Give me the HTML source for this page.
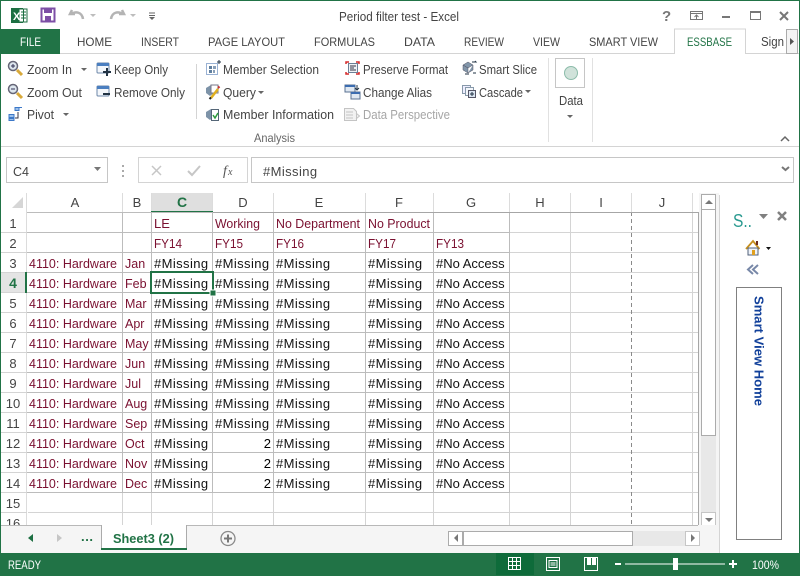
<!DOCTYPE html>
<html><head><meta charset="utf-8"><title>Period filter test - Excel</title>
<style>
html,body{margin:0;padding:0;background:#fff;width:800px;height:576px;overflow:hidden}
svg{display:block}
text{font-family:"Liberation Sans",sans-serif;font-size:13px;fill:#000;white-space:pre}
.t{font-size:12px;fill:#444}
.r{font-size:12.5px;fill:#444}
.l{font-size:12.5px;fill:#7a1030}
.l2{font-size:13px;fill:#7a1030}
.m{letter-spacing:.4px;fill:#111}
.n{fill:#111}
.h{fill:#444;font-size:13px;text-anchor:middle}
.w{fill:#fff;font-size:12px}
</style></head><body>
<svg width="800" height="576" viewBox="0 0 800 576" xmlns="http://www.w3.org/2000/svg">
<rect width="800" height="576" fill="#fff"/>

<!-- title bar -->
<rect x="11" y="8" width="12" height="15" fill="#1d6f42"/><rect x="19" y="9" width="8" height="13" fill="#fff" stroke="#1d6f42"/>
<path d="M21 12h5M21 15h5M21 18h5M23.500 9v13" stroke="#1d6f42" fill="none"/>
<text x="13" y="20" style="font-size:11px;font-weight:bold;fill:#fff">X</text>
<path d="M41.500 8.500h13v13h-13z" fill="#fff" stroke="#7d4fa6" stroke-width="2"/><rect x="44" y="8" width="8" height="5" fill="#7d4fa6"/><rect x="45" y="16" width="6" height="5" fill="#7d4fa6"/>
<path d="M72 10l-2 4 5 0M71 14c5-3 11-2 12 5" fill="none" stroke="#b4b4b4" stroke-width="2.500"/><path d="M90 14h6l-3 3z" fill="#bdbdbd"/>
<path d="M122 10l2 4-5 0M123 14c-5-3-11-2-12 5" fill="none" stroke="#b4b4b4" stroke-width="2.500"/><path d="M130 14h6l-3 3z" fill="#bdbdbd"/>
<path d="M149 13h6M149 15.500h6" stroke="#666"/><path d="M149 17h6l-3 3z" fill="#666"/>
<text x="339" y="21" class="r" textLength="120" lengthAdjust="spacingAndGlyphs">Period filter test - Excel</text>
<text x="662" y="21" style="font-size:15px;font-weight:bold;fill:#777">?</text>
<rect x="690.500" y="11.500" width="12" height="8" fill="none" stroke="#777"/><path d="M690 13.500h13M696.500 19v-4M694.500 17l2-2 2 2" stroke="#777" fill="none"/>
<rect x="722" y="16" width="8" height="2" fill="#777"/>
<rect x="750.500" y="11.500" width="10" height="8" fill="none" stroke="#777"/><rect x="750" y="11" width="11" height="2" fill="#777"/>
<path d="M780 12l8 8M788 12l-8 8" stroke="#777" stroke-width="2"/>

<!-- tabs -->
<rect x="0" y="53" width="800" height="1" fill="#d4d4d4"/>
<rect x="1" y="29" width="59" height="25" fill="#217346"/>
<text x="20" y="46" style="font-size:12px;fill:#fff" textLength="21" lengthAdjust="spacingAndGlyphs">FILE</text>
<text x="77" y="46" class="t" textLength="35" lengthAdjust="spacingAndGlyphs">HOME</text>
<text x="141" y="46" class="t" textLength="38" lengthAdjust="spacingAndGlyphs">INSERT</text>
<text x="208" y="46" class="t" textLength="77" lengthAdjust="spacingAndGlyphs">PAGE LAYOUT</text>
<text x="314" y="46" class="t" textLength="61" lengthAdjust="spacingAndGlyphs">FORMULAS</text>
<text x="404" y="46" class="t" textLength="31" lengthAdjust="spacingAndGlyphs">DATA</text>
<text x="464" y="46" class="t" textLength="40" lengthAdjust="spacingAndGlyphs">REVIEW</text>
<text x="533" y="46" class="t" textLength="27" lengthAdjust="spacingAndGlyphs">VIEW</text>
<text x="589" y="46" class="t" textLength="69" lengthAdjust="spacingAndGlyphs">SMART VIEW</text>
<path d="M674.500 54v-25h71v25" fill="#fff" stroke="#d4d4d4"/><rect x="675" y="53" width="70" height="1" fill="#fff"/>
<text x="687" y="46" style="font-size:12px;fill:#217346" textLength="45" lengthAdjust="spacingAndGlyphs">ESSBASE</text>
<text x="761" y="46" class="r" textLength="23" lengthAdjust="spacingAndGlyphs">Sign</text>
<rect x="786.500" y="29.500" width="11" height="24" fill="#f4f4f4" stroke="#ababab"/><path d="M790 38v7l4-3.500z" fill="#555"/>

<!-- ribbon text -->
<text x="27" y="74" class="r" textLength="45" lengthAdjust="spacingAndGlyphs">Zoom In</text>
<text x="27" y="97" class="r" textLength="55" lengthAdjust="spacingAndGlyphs">Zoom Out</text>
<text x="27" y="119" class="r" textLength="27" lengthAdjust="spacingAndGlyphs">Pivot</text>
<text x="114" y="74" class="r" textLength="54" lengthAdjust="spacingAndGlyphs">Keep Only</text>
<text x="114" y="97" class="r" textLength="71" lengthAdjust="spacingAndGlyphs">Remove Only</text>
<text x="223" y="74" class="r" textLength="96" lengthAdjust="spacingAndGlyphs">Member Selection</text>
<text x="223" y="97" class="r" textLength="33" lengthAdjust="spacingAndGlyphs">Query</text>
<text x="223" y="119" class="r" textLength="111" lengthAdjust="spacingAndGlyphs">Member Information</text>
<text x="363" y="74" class="r" textLength="85" lengthAdjust="spacingAndGlyphs">Preserve Format</text>
<text x="363" y="97" class="r" textLength="69" lengthAdjust="spacingAndGlyphs">Change Alias</text>
<text x="363" y="119" style="font-size:12.500px;fill:#a6a6a6" textLength="87" lengthAdjust="spacingAndGlyphs">Data Perspective</text>
<text x="479" y="74" class="r" textLength="58" lengthAdjust="spacingAndGlyphs">Smart Slice</text>
<text x="479" y="97" class="r" textLength="44" lengthAdjust="spacingAndGlyphs">Cascade</text>
<text x="559" y="105" class="r" textLength="24" lengthAdjust="spacingAndGlyphs">Data</text>
<text x="254" y="142" style="font-size:12px;fill:#666" textLength="41" lengthAdjust="spacingAndGlyphs">Analysis</text>

<!-- ribbon carets -->
<path d="M81 68h6l-3 3zM63 113h6l-3 3zM258 91h6l-3 3zM525 90h6l-3 3zM567 115h6l-3 3z" fill="#666"/>

<!-- separators -->
<rect x="196" y="64" width="1" height="55" fill="#d4d4d4"/>
<rect x="548" y="58" width="1" height="84" fill="#e1e1e1"/>
<rect x="592" y="58" width="1" height="84" fill="#e1e1e1"/>
<rect x="0" y="146" width="800" height="1" fill="#d4d4d4"/>
<path d="M781 141l4-4 4 4" fill="none" stroke="#666" stroke-width="1.500"/>

<!-- ribbon icons -->
<circle cx="13" cy="66" r="4.500" fill="#dde6ee" stroke="#667"  stroke-width="1.500"/><path d="M11 66h4M13 64v4" stroke="#335"/><path d="M17 70l5 5" stroke="#d8a93a" stroke-width="3"/>
<circle cx="13" cy="89" r="4.500" fill="#dde6ee" stroke="#667" stroke-width="1.500"/><path d="M11 89h4" stroke="#335"/><path d="M17 93l5 5" stroke="#d8a93a" stroke-width="3"/>
<path d="M15 107.500h4v3h-4zM19 107.500h3M9 114.500h5v3h-5zM9 118.500h5v2h-5z" fill="#9cc0ea" stroke="#3c78c8"/><path d="M18 112v6h-3" stroke="#334" fill="none"/>
<rect x="97" y="63" width="12" height="10" rx="1" fill="#f4f7fb" stroke="#6d87a8"/><rect x="97" y="63" width="12" height="3" fill="#4b7fc0"/><path d="M103 72h8M107 68v8" stroke="#234" stroke-width="2"/>
<rect x="97" y="86" width="12" height="10" rx="1" fill="#f4f7fb" stroke="#6d87a8"/><rect x="97" y="86" width="12" height="3" fill="#4b7fc0"/><path d="M103 94h7" stroke="#234" stroke-width="2"/>
<rect x="206.500" y="63.500" width="11" height="11" fill="none" stroke="#3566a8" stroke-dasharray="1 1"/><rect x="209" y="66" width="3" height="3" fill="#5f7f9f"/><rect x="213" y="66" width="3" height="3" fill="#8aa0b8"/><rect x="209" y="70" width="3" height="3" fill="#5f7f9f"/><rect x="213" y="70" width="2" height="3" fill="#8aa0b8"/><path d="M217 62h4M219 60v4" stroke="#234"/>
<path d="M206 88l5-3 3 2v6l-4 3-4-3z" fill="#7d93a8"/><rect x="211" y="85" width="7" height="8" fill="#fff" stroke="#778"/><path d="M211 98l7-9" stroke="#e0b020" stroke-width="2.500"/><path d="M218 88l1.500-1.500" stroke="#c33" stroke-width="2"/><path d="M209.500 99l1.500-1.500" stroke="#222" stroke-width="2"/>
<path d="M206 112l5-3 3 2v6l-4 3-4-3z" fill="#7d93a8"/><rect x="211.500" y="109.500" width="7" height="11" fill="#fff" stroke="#567"/><path d="M213 115l2 3 3-5" stroke="#2a9a3a" fill="none" stroke-width="1.500"/>
<path d="M346 64v-2h3M356 62h3v2M346 72v2h3M359 72v2h-3" stroke="#d62a2a" fill="none" stroke-width="1.500"/><rect x="348.500" y="63.500" width="9" height="9" fill="#eef2f6" stroke="#6a7f96"/><path d="M350 66h6M350 68h4M350 70h6" stroke="#334"/>
<rect x="345" y="85" width="10" height="7" fill="#dfe8f2" stroke="#5a7090"/><rect x="345" y="85" width="10" height="2" fill="#3b6cb0"/><rect x="351" y="92" width="9" height="7" fill="#dfe8f2" stroke="#5a7090"/><rect x="351" y="92" width="9" height="2" fill="#3b6cb0"/><path d="M357 85v5M355 88l2 2 2-2" stroke="#234" fill="none"/>
<path d="M344.500 108.500h9l3 3v9h-12zM356 113l3.500 3-3.500 3" fill="#f2f2f2" stroke="#c4c4c4"/><path d="M346 112h7M346 115h7M346 118h7" stroke="#c4c4c4"/>
<path d="M463 65l5-3 5 3-5 3zM463 65v5l5 3v-5zM473 65v5l-5 3" fill="#8296aa" stroke="#556"  stroke-width=".5"/><path d="M472 62h4l-1-1M476 73h-3M465 74h4" stroke="#234" fill="none"/>
<rect x="462.500" y="85.500" width="8" height="8" fill="#eef" stroke="#8899aa"/><rect x="465.500" y="87.500" width="8" height="8" fill="#f4f7fb" stroke="#8899aa"/><rect x="468.500" y="90.500" width="7" height="7" fill="#dce6f2" stroke="#556"/><path d="M470 94h4M472 92v4" stroke="#234"/>
<rect x="555.500" y="58.500" width="29" height="29" fill="#fff" stroke="#c6c6c6"/>
<circle cx="571" cy="73" r="6.500" fill="#d0e2da" stroke="#8cbcaa"/>

<!-- formula bar -->
<rect x="6.500" y="157.500" width="101" height="25" fill="#fff" stroke="#c6c6c6"/>
<text x="13" y="176" style="font-size:13px;fill:#444" textLength="16" lengthAdjust="spacingAndGlyphs">C4</text>
<path d="M94 167h7l-3.500 4z" fill="#777"/>
<path d="M123 165v2M123 170v2M123 175v2" stroke="#aaa" stroke-width="2"/>
<rect x="138.500" y="157.500" width="109" height="25" fill="#fff" stroke="#d4d4d4"/>
<path d="M152 166l9 9M161 166l-9 9" stroke="#c6c6c6" stroke-width="1.500"/>
<path d="M188 171l4 4 8-9" stroke="#c6c6c6" stroke-width="2" fill="none"/>
<text x="223" y="175" style="font-family:'Liberation Serif',serif;font-style:italic;font-size:14px;fill:#555">f</text><text x="228" y="175" style="font-family:'Liberation Serif',serif;font-style:italic;font-size:10px;fill:#555">x</text>
<rect x="251.500" y="157.500" width="542" height="25" fill="#fff" stroke="#c6c6c6"/>
<text x="263" y="176" class="m" style="fill:#444">#Missing</text>
<path d="M782 167l3.500 3 3.500-3" stroke="#777" stroke-width="2" fill="none"/>

<!-- headers -->
<path d="M23 197v11h-11z" fill="#d6d6d6"/>
<rect x="152" y="193" width="60" height="18" fill="#dfdfdf"/>
<rect x="26" y="272" width="1" height="20" fill="#e1e1e1"/>
<rect x="1" y="273" width="24" height="19" fill="#e4e4e4"/>
<path d="M26.500 193v332M122.500 193v19M151.500 193v19M212.500 193v19M273.500 193v19M365.500 193v19M433.500 193v19M509.500 193v19M570.500 193v19M631.500 193v19M692.500 193v19" stroke="#dcdcdc" fill="none"/>
<text x="75" y="207" class="h">A</text><text x="137" y="207" class="h">B</text>
<text x="182" y="207" class="h" style="fill:#217346;font-weight:bold;font-size:14px">C</text>
<text x="243" y="207" class="h">D</text><text x="319" y="207" class="h">E</text><text x="399" y="207" class="h">F</text><text x="471" y="207" class="h">G</text><text x="540" y="207" class="h">H</text><text x="601" y="207" class="h">I</text><text x="662" y="207" class="h">J</text>
<rect x="151" y="211" width="62" height="2" fill="#217346"/>

<!-- grid -->
<path d="M27 232.500H698M27 252.500H698M27 272.500H698M27 292.500H698M27 312.500H698M27 332.500H698M27 352.500H698M27 372.500H698M27 392.500H698M27 412.500H698M27 432.500H698M27 452.500H698M27 472.500H698M27 492.500H698M27 512.500H698M0 232.500H26M0 252.500H26M0 272.500H26M0 292.500H26M0 312.500H26M0 332.500H26M0 352.500H26M0 372.500H26M0 392.500H26M0 412.500H26M0 432.500H26M0 452.500H26M0 472.500H26M0 492.500H26M0 512.500H26" stroke="#d4d4d4" fill="none" transform="translate(1 0)"/>
<path d="M122.500 212v313M151.500 212v313M212.500 212v313M273.500 212v313M365.500 212v313M433.500 212v313M509.500 212v313M570.500 212v313M692.500 212v313" stroke="#d4d4d4" fill="none"/>
<path d="M27 232.500H509M27 252.500H509M27 272.500H509M27 292.500H509M27 312.500H509M27 332.500H509M27 352.500H509M27 372.500H509M27 392.500H509M27 412.500H509M27 432.500H509M27 452.500H509M27 472.500H509M27 492.500H509M122.500 212v281M151.500 212v281M212.500 212v281M273.500 212v281M365.500 212v281M433.500 212v281M509.500 212v281" stroke="#bcbcbc" fill="none"/>
<path d="M631.500 212v313" stroke="#8a8a8a" stroke-dasharray="4 3" fill="none"/>
<path d="M213 212.500H698.500V525" stroke="#a6a6a6" fill="none"/>
<path d="M27 212.500H213" stroke="#bcbcbc" fill="none"/>

<!-- row numbers -->
<text x="13" y="228" class="h">1</text><text x="13" y="248" class="h">2</text><text x="13" y="268" class="h">3</text>
<text x="13" y="288" class="h" style="fill:#217346;font-weight:bold;font-size:14px">4</text>
<text x="13" y="308" class="h">5</text><text x="13" y="328" class="h">6</text><text x="13" y="348" class="h">7</text><text x="13" y="368" class="h">8</text><text x="13" y="388" class="h">9</text><text x="13" y="408" class="h">10</text><text x="13" y="428" class="h">11</text><text x="13" y="448" class="h">12</text><text x="13" y="468" class="h">13</text><text x="13" y="488" class="h">14</text><text x="13" y="508" class="h">15</text><text x="13" y="528" class="h">16</text>
<rect x="25" y="272" width="2" height="21" fill="#217346"/>

<!-- headers rows 1-2 -->
<text x="154" y="228" class="l2">LE</text><text x="215" y="228" class="l2" textLength="45" lengthAdjust="spacingAndGlyphs">Working</text><text x="276" y="228" class="l2" textLength="84" lengthAdjust="spacingAndGlyphs">No Department</text><text x="368" y="228" class="l2" textLength="62" lengthAdjust="spacingAndGlyphs">No Product</text>
<text x="154" y="248" class="l2" textLength="28" lengthAdjust="spacingAndGlyphs">FY14</text><text x="215" y="248" class="l2" textLength="28" lengthAdjust="spacingAndGlyphs">FY15</text><text x="276" y="248" class="l2" textLength="28" lengthAdjust="spacingAndGlyphs">FY16</text><text x="368" y="248" class="l2" textLength="28" lengthAdjust="spacingAndGlyphs">FY17</text><text x="436" y="248" class="l2" textLength="28" lengthAdjust="spacingAndGlyphs">FY13</text>

<!-- col A -->
<text x="29" y="268" class="l">4110: Hardware</text><text x="29" y="288" class="l">4110: Hardware</text><text x="29" y="308" class="l">4110: Hardware</text><text x="29" y="328" class="l">4110: Hardware</text><text x="29" y="348" class="l">4110: Hardware</text><text x="29" y="368" class="l">4110: Hardware</text><text x="29" y="388" class="l">4110: Hardware</text><text x="29" y="408" class="l">4110: Hardware</text><text x="29" y="428" class="l">4110: Hardware</text><text x="29" y="448" class="l">4110: Hardware</text><text x="29" y="468" class="l">4110: Hardware</text><text x="29" y="488" class="l">4110: Hardware</text>
<!-- col B -->
<text x="125" y="268" class="l">Jan</text><text x="125" y="288" class="l">Feb</text><text x="125" y="308" class="l">Mar</text><text x="125" y="328" class="l">Apr</text><text x="125" y="348" class="l">May</text><text x="125" y="368" class="l">Jun</text><text x="125" y="388" class="l">Jul</text><text x="125" y="408" class="l">Aug</text><text x="125" y="428" class="l">Sep</text><text x="125" y="448" class="l">Oct</text><text x="125" y="468" class="l">Nov</text><text x="125" y="488" class="l">Dec</text>
<!-- col C -->
<text x="154" y="268" class="m">#Missing</text><text x="154" y="288" class="m">#Missing</text><text x="154" y="308" class="m">#Missing</text><text x="154" y="328" class="m">#Missing</text><text x="154" y="348" class="m">#Missing</text><text x="154" y="368" class="m">#Missing</text><text x="154" y="388" class="m">#Missing</text><text x="154" y="408" class="m">#Missing</text><text x="154" y="428" class="m">#Missing</text><text x="154" y="448" class="m">#Missing</text><text x="154" y="468" class="m">#Missing</text><text x="154" y="488" class="m">#Missing</text>
<!-- col D -->
<text x="215" y="268" class="m">#Missing</text><text x="215" y="288" class="m">#Missing</text><text x="215" y="308" class="m">#Missing</text><text x="215" y="328" class="m">#Missing</text><text x="215" y="348" class="m">#Missing</text><text x="215" y="368" class="m">#Missing</text><text x="215" y="388" class="m">#Missing</text><text x="215" y="408" class="m">#Missing</text><text x="215" y="428" class="m">#Missing</text><text x="271" y="448" text-anchor="end">2</text><text x="271" y="468" text-anchor="end">2</text><text x="271" y="488" text-anchor="end">2</text>
<!-- col E -->
<text x="276" y="268" class="m">#Missing</text><text x="276" y="288" class="m">#Missing</text><text x="276" y="308" class="m">#Missing</text><text x="276" y="328" class="m">#Missing</text><text x="276" y="348" class="m">#Missing</text><text x="276" y="368" class="m">#Missing</text><text x="276" y="388" class="m">#Missing</text><text x="276" y="408" class="m">#Missing</text><text x="276" y="428" class="m">#Missing</text><text x="276" y="448" class="m">#Missing</text><text x="276" y="468" class="m">#Missing</text><text x="276" y="488" class="m">#Missing</text>
<!-- col F -->
<text x="368" y="268" class="m">#Missing</text><text x="368" y="288" class="m">#Missing</text><text x="368" y="308" class="m">#Missing</text><text x="368" y="328" class="m">#Missing</text><text x="368" y="348" class="m">#Missing</text><text x="368" y="368" class="m">#Missing</text><text x="368" y="388" class="m">#Missing</text><text x="368" y="408" class="m">#Missing</text><text x="368" y="428" class="m">#Missing</text><text x="368" y="448" class="m">#Missing</text><text x="368" y="468" class="m">#Missing</text><text x="368" y="488" class="m">#Missing</text>
<!-- col G -->
<text x="436" y="268" class="n">#No Access</text><text x="436" y="288" class="n">#No Access</text><text x="436" y="308" class="n">#No Access</text><text x="436" y="328" class="n">#No Access</text><text x="436" y="348" class="n">#No Access</text><text x="436" y="368" class="n">#No Access</text><text x="436" y="388" class="n">#No Access</text><text x="436" y="408" class="n">#No Access</text><text x="436" y="428" class="n">#No Access</text><text x="436" y="448" class="n">#No Access</text><text x="436" y="468" class="n">#No Access</text><text x="436" y="488" class="n">#No Access</text>

<!-- selection -->
<rect x="151" y="272" width="62" height="21" fill="none" stroke="#217346" stroke-width="2"/>
<rect x="210" y="290" width="6" height="6" fill="#217346" stroke="#fff"/>

<!-- vertical scrollbar -->
<rect x="699" y="193" width="20" height="360" fill="#f5f5f5"/>
<rect x="701" y="209" width="15" height="303" fill="#e8e8e8"/>
<rect x="701.500" y="194.500" width="14" height="15" fill="#fff" stroke="#ababab"/><path d="M705 204h8l-4-4z" fill="#777"/>
<rect x="701.500" y="209.500" width="14" height="226" fill="#fff" stroke="#ababab"/>
<rect x="701.500" y="512.500" width="14" height="14" fill="#fff" stroke="#c6c6c6"/><path d="M705 518h8l-4 4z" fill="#777"/>

<!-- sheet tab bar -->
<rect x="1" y="525" width="718" height="28" fill="#f5f5f5"/>
<path d="M1 525.500H698" stroke="#b8b8b8" fill="none"/>
<path d="M101.500 525V549M186.500 525V549" stroke="#ababab" fill="none"/>
<rect x="102" y="525" width="84" height="23" fill="#fff"/>
<rect x="101" y="548" width="86" height="2" fill="#217346"/>
<text x="113" y="543" style="font-size:13px;font-weight:bold;fill:#217346" textLength="61" lengthAdjust="spacingAndGlyphs">Sheet3 (2)</text>
<path d="M33 534v8l-5-4z" fill="#1d6f42"/><path d="M57 534v8l5-4z" fill="#c6c6c6"/>
<text x="81" y="541" style="font-size:13px;font-weight:bold;fill:#1d6f42" textLength="12">...</text>
<circle cx="228" cy="538.500" r="7" fill="none" stroke="#8a8a8a" stroke-width="1.300"/><path d="M224 538.500h8M228 534.500v8" stroke="#777" stroke-width="2"/>

<!-- horizontal scrollbar -->
<rect x="463" y="531" width="222" height="15" fill="#e8e8e8"/>
<rect x="448.500" y="531.500" width="14" height="14" fill="#fff" stroke="#ababab"/><path d="M458 534v8l-4-4z" fill="#777"/>
<rect x="463.500" y="531.500" width="169" height="14" fill="#fff" stroke="#ababab"/>
<rect x="685.500" y="531.500" width="14" height="14" fill="#fff" stroke="#c6c6c6"/><path d="M691 534v8l4-4z" fill="#777"/>

<!-- right pane -->
<rect x="719" y="195" width="1" height="358" fill="#d4d4d4"/>
<text x="733" y="227" style="font-size:18px;fill:#2a9a90" textLength="19" lengthAdjust="spacingAndGlyphs">S..</text>
<path d="M759 214h9l-4.500 5z" fill="#808080"/>
<path d="M778 212l8 8M786 212l-8 8" stroke="#808080" stroke-width="2.500"/>
<path d="M746 249l7-8 6.500 8" fill="none" stroke="#c7901e" stroke-width="1.800"/><path d="M748 248h10v7h-10z" fill="#eef2f8" stroke="#50607a"/><rect x="752" y="250" width="3" height="5" fill="#e0a020"/><rect x="756" y="241" width="2" height="4" fill="#6a2a20"/>
<path d="M766 247h5l-2.500 3z" fill="#111"/>
<path d="M753 265l-5 4.500 5 4.500M758 265l-5 4.500 5 4.500" fill="none" stroke="#7888a8" stroke-width="2"/>
<rect x="736.500" y="287.500" width="45" height="252" fill="#fff" stroke="#808080"/>
<text transform="translate(754.500 296) rotate(90)" style="font-size:12.500px;font-weight:bold;fill:#11409a" textLength="110" lengthAdjust="spacingAndGlyphs">Smart View Home</text>

<!-- status bar -->
<rect x="0" y="553" width="800" height="23" fill="#217346"/>
<text x="8" y="569" class="w" textLength="33" lengthAdjust="spacingAndGlyphs">READY</text>
<rect x="496" y="553" width="38" height="22" fill="#0e6b3a"/>
<path d="M508.500 557.500h12v12h-12zM512.500 557.500v12M516.500 557.500v12M508.500 561.500h12M508.500 565.500h12" fill="none" stroke="#fff"/>
<rect x="546.500" y="557.500" width="13" height="13" fill="none" stroke="#fff"/><path d="M549 560.500h8v7h-8zM550.500 563h5M550.500 565h5" fill="none" stroke="#fff"/>
<rect x="584.500" y="557.500" width="13" height="13" fill="none" stroke="#fff"/><path d="M587 558h4v7h-4zM592 558h4v7h-4z" fill="#fff"/>
<rect x="615" y="563" width="6" height="2" fill="#fff"/>
<rect x="625" y="563.500" width="100" height="1" fill="#fff"/>
<rect x="673" y="558" width="5" height="12" fill="#fff"/>
<path d="M729 564h8M733 560v8" stroke="#fff" stroke-width="2"/>
<text x="752" y="569" class="w" textLength="27" lengthAdjust="spacingAndGlyphs">100%</text>

<!-- window border -->
<rect x="0" y="0" width="800" height="1" fill="#217346"/>
<rect x="0" y="0" width="1" height="576" fill="#217346"/>
<rect x="799" y="0" width="1" height="576" fill="#217346"/>
</svg>
</body></html>
